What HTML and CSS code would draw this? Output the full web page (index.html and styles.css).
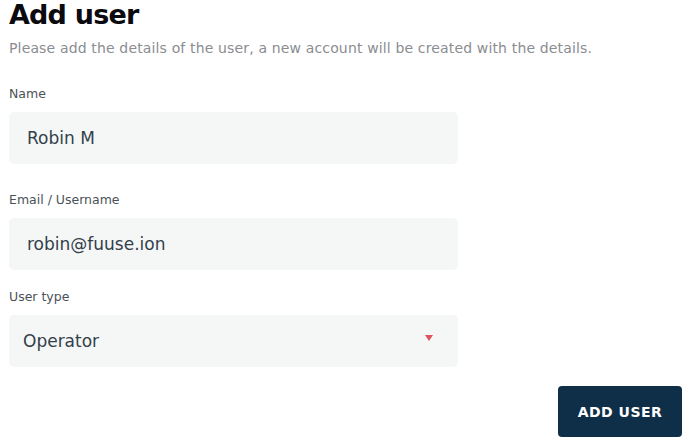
FILE: index.html
```html
<!DOCTYPE html>
<html lang="en">
<head>
    <meta charset="UTF-8">
    <meta name="viewport" content="width=device-width, initial-scale=1.0">
    <title>Add user</title>
    <link rel="stylesheet" href="styles.css">
</head>
<body>
    <div class="page">
        <h1>Add user</h1>
        <p class="subtitle">Please add the details of the user, a new account will be created with the details.</p>

        <div class="form">
            <div class="field field-first">
                <label class="label">Name</label>
                <div class="input">Robin M</div>
            </div>

            <div class="field">
                <label class="label">Email / Username</label>
                <div class="input">robin@fuuse.ion</div>
            </div>

            <div class="field">
                <label class="label">User type</label>
                <div class="input select">
                    <span>Operator</span>
                    <span class="caret"></span>
                </div>
            </div>
        </div>

        <div class="actions">
            <button class="add-btn">ADD USER</button>
        </div>
    </div>
</body>
</html>
```

FILE: styles.css
```css
body {
    margin: 0;
    background: #fff;
    font-family: 'DejaVu Sans', sans-serif;
    color: #2f3a40;
}
.page {
    padding: 0 8px 0 9px;
}
h1 {
    margin: 0;
    font-size: 27px;
    line-height: 30px;
    font-weight: 800;
    color: #0b0b0f;
    letter-spacing: -0.8px;
}
.subtitle {
    margin: 9px 0 0;
    font-size: 14px;
    line-height: 18px;
    letter-spacing: 0.15px;
    color: #8a8d91;
}
.form {
    width: 449px;
    margin-top: 29px;
}
.field {
    margin-bottom: 19px;
}
.field-first {
    margin-bottom: 28px;
}
.label {
    display: block;
    font-size: 12.5px;
    line-height: 16px;
    color: #4a5258;
    margin-bottom: 10px;
}
.input {
    height: 52px;
    box-sizing: border-box;
    background: #f5f7f7;
    border-radius: 5px;
    padding: 0 18px;
    display: flex;
    align-items: center;
    font-size: 17px;
    color: #33404a;
}
.select {
    justify-content: space-between;
    padding: 0 25px 0 14px;
}
.caret {
    width: 0;
    height: 0;
    border-left: 4px solid transparent;
    border-right: 4px solid transparent;
    border-top: 6px solid #e0525e;
    margin-top: -6px;
}
.actions {
    display: flex;
    justify-content: flex-end;
}
.add-btn {
    width: 124px;
    height: 51px;
    background: #0f2f48;
    color: #fff;
    border: none;
    border-radius: 4px;
    font-family: 'DejaVu Sans', sans-serif;
    font-weight: bold;
    font-size: 14px;
    letter-spacing: 0.5px;
}
```
